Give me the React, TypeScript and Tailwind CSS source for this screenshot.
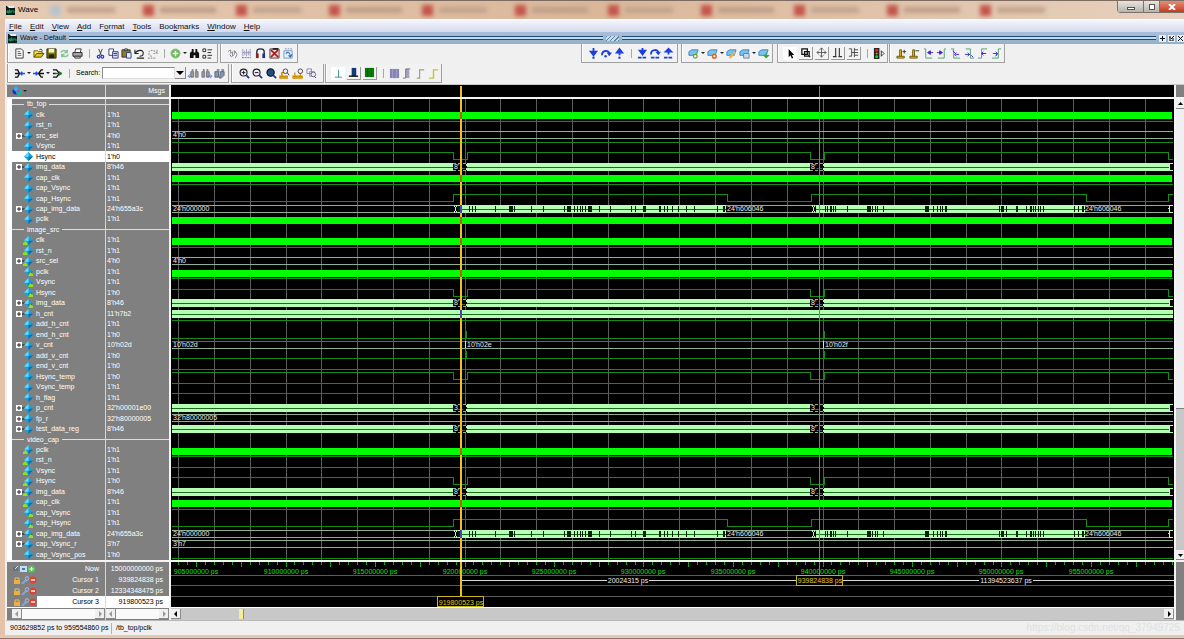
import React, { useState } from "react";

type Kind = "group" | "plain" | "in" | "out";
type Wave = "none" | "clock" | "high" | "low" | "sync" | "capSync" | "bus" | "dense" | "denseFull" | "capData" | "count" | "pulse";

type Signal = {
  name: string;
  value?: string;
  kind: Kind;
  wave: Wave;
  expand?: boolean;
  label?: string;
};

const signals: Signal[] = [
  { name: "tb_top", kind: "group", wave: "none" },
  { name: "clk", value: "1'h1", kind: "plain", wave: "clock" },
  { name: "rst_n", value: "1'h1", kind: "plain", wave: "high" },
  { name: "src_sel", value: "4'h0", kind: "plain", wave: "bus", expand: true, label: "4'h0" },
  { name: "Vsync", value: "1'h1", kind: "plain", wave: "high" },
  { name: "Hsync", value: "1'h0", kind: "plain", wave: "sync" },
  { name: "img_data", value: "8'h46", kind: "plain", wave: "dense", expand: true, label: "8'..." },
  { name: "cap_clk", value: "1'h1", kind: "plain", wave: "clock" },
  { name: "cap_Vsync", value: "1'h1", kind: "plain", wave: "high" },
  { name: "cap_Hsync", value: "1'h1", kind: "plain", wave: "capSync" },
  { name: "cap_img_data", value: "24'h655a3c", kind: "plain", wave: "capData", expand: true },
  { name: "pclk", value: "1'h1", kind: "plain", wave: "clock" },
  { name: "image_src", kind: "group", wave: "none" },
  { name: "clk", value: "1'h1", kind: "in", wave: "clock" },
  { name: "rst_n", value: "1'h1", kind: "in", wave: "high" },
  { name: "src_sel", value: "4'h0", kind: "in", wave: "bus", expand: true, label: "4'h0" },
  { name: "pclk", value: "1'h1", kind: "out", wave: "clock" },
  { name: "Vsync", value: "1'h1", kind: "out", wave: "high" },
  { name: "Hsync", value: "1'h0", kind: "out", wave: "sync" },
  { name: "img_data", value: "8'h46", kind: "out", wave: "dense", expand: true, label: "8'..." },
  { name: "h_cnt", value: "11'h7b2", kind: "plain", wave: "denseFull", expand: true },
  { name: "add_h_cnt", value: "1'h1", kind: "plain", wave: "high" },
  { name: "end_h_cnt", value: "1'h0", kind: "plain", wave: "pulse" },
  { name: "v_cnt", value: "10'h02d", kind: "plain", wave: "count", expand: true },
  { name: "add_v_cnt", value: "1'h0", kind: "plain", wave: "pulse" },
  { name: "end_v_cnt", value: "1'h0", kind: "plain", wave: "low" },
  { name: "Hsync_temp", value: "1'h0", kind: "plain", wave: "sync" },
  { name: "Vsync_temp", value: "1'h1", kind: "plain", wave: "high" },
  { name: "h_flag", value: "1'h1", kind: "plain", wave: "high" },
  { name: "p_cnt", value: "32'h00001e00", kind: "plain", wave: "dense", expand: true, label: "3..." },
  { name: "fp_r", value: "32'h80000005", kind: "plain", wave: "bus", expand: true, label: "32'h80000005" },
  { name: "test_data_reg", value: "8'h46", kind: "plain", wave: "dense", expand: true, label: "8'..." },
  { name: "video_cap", kind: "group", wave: "none" },
  { name: "pclk", value: "1'h1", kind: "in", wave: "clock" },
  { name: "rst_n", value: "1'h1", kind: "in", wave: "high" },
  { name: "Vsync", value: "1'h1", kind: "in", wave: "high" },
  { name: "Hsync", value: "1'h0", kind: "in", wave: "sync" },
  { name: "img_data", value: "8'h46", kind: "in", wave: "dense", expand: true, label: "8'..." },
  { name: "cap_clk", value: "1'h1", kind: "in", wave: "clock" },
  { name: "cap_Vsync", value: "1'h1", kind: "out", wave: "high" },
  { name: "cap_Hsync", value: "1'h1", kind: "out", wave: "capSync" },
  { name: "cap_img_data", value: "24'h655a3c", kind: "out", wave: "capData", expand: true },
  { name: "cap_Vsync_r", value: "3'h7", kind: "plain", wave: "bus", expand: true, label: "3'h7" },
  { name: "cap_Vsync_pos", value: "1'h0", kind: "plain", wave: "low" },
];

const SELECTED = 5;

// Geometry of the wave pane, in its own pixels
const ROWS_HEIGHT = 461;
const PITCH = ROWS_HEIGHT / signals.length;
const START = 1;
const END = 1002;
const CURSOR_3 = 290;
const CURSOR_1 = 648;
const timeX = (ps: number) => 25 + (ps - 905) * 17.9;

/* ---------- toolbar icons ---------- */

const icons: Record<string, React.ReactNode> = {
  fresh: <><path d="M2 1h6l2 2v8H2z" fill="#fff" stroke="#333" /><path d="M4 4h3M4 6h4M4 8h4" stroke="#555" /></>,
  open: <><path d="M1 10V3h4l1 1h4v2" fill="#f4e04a" stroke="#6a5a00" /><path d="M1 10l3-4h8l-3 4z" fill="#d9c31a" stroke="#5a4a00" /><path d="M7 2c1-1 3-1 3 1" stroke="#222" fill="none" /></>,
  save: <><path d="M1 1h10v10H1z" fill="#7a7400" stroke="#2c2a00" /><path d="M3 1h6v4H3z" fill="#f4f4c0" /><path d="M3 7h6v4H3z" fill="#222" /></>,
  reload: <path d="M2 5c1-3 6-3 7 0M9 2v3H6M10 7c-1 3-6 3-7 0M3 10V7h3" fill="none" stroke="#86c49a" strokeWidth="1.6" />,
  print: <><path d="M3 5l1-4h6l-1 4" fill="#fff" stroke="#333" /><path d="M1 5h10v4H1z" fill="#aaa" stroke="#222" /><path d="M3 9h6v2H3z" fill="#ddd" stroke="#333" /></>,
  cut: <><path d="M4 1l3 7M8 1L5 8" stroke="#334" fill="none" /><circle cx="4" cy="9.5" r="1.5" fill="none" stroke="#2330e0" strokeWidth="1.3" /><circle cx="8" cy="9.5" r="1.5" fill="none" stroke="#2330e0" strokeWidth="1.3" /></>,
  copy: <><path d="M1 1h5v7H1z" fill="#fff" stroke="#33397a" /><path d="M5 4h6v7H5z" fill="#dfe3ff" stroke="#33397a" /><path d="M6 6h4M6 8h4" stroke="#33397a" /></>,
  paste: <><path d="M1 2h9v8H1z" fill="#8a7d20" stroke="#333" /><path d="M4 1h3v2H4z" fill="#ccc" stroke="#333" /><path d="M6 5h5v6H6z" fill="#e4e8ff" stroke="#33397a" /></>,
  undo: <path d="M1 2v4h4M1 6c3-5 10-4 9 0 0 2-2 3-4 3M3 11h8" fill="none" stroke="#222" strokeWidth="1.2" />,
  redo: <path d="M11 2v4H7M11 6C8 1 1 2 2 6c0 2 2 3 4 3M1 11h8" fill="none" stroke="#999" strokeWidth="1.2" strokeDasharray="2 1" />,
  add: <><circle cx="6" cy="6" r="5" fill="#6ab85a" stroke="#8cc880" /><path d="M6 3v6M3 6h6" stroke="#fff" strokeWidth="1.6" /></>,
  find: <><path d="M3 1h2v4H3zM7 1h2v4H7z" fill="#111" /><path d="M1 6l1-2h3v7H1zM7 4h3l1 2v5H7zM5 5h2v3H5z" fill="#111" /></>,
  tree: <path d="M1 1h3v3H1zM1 8h3v3H1zM6 2h5M6 5h4M6 8h5M6 11h4" fill="none" stroke="#222" />,
  squiggle: <><path d="M1 4l3-2v4l2-2v5l2-2V3l3 4-2 4" fill="none" stroke="#888" /><path d="M3 7l2 3M8 3l2 2" stroke="#6870d0" /></>,
  grid: <><path d="M2 1v8M4 3v5M6 1v8M8 3v5M10 1v8M1 5h10" stroke="#99b" fill="none" /><path d="M1 10.5h10" stroke="#5060d0" strokeDasharray="2 1" /></>,
  listen: <><path d="M2 9V4c0-4 8-4 8 0v5" fill="none" stroke="#223" strokeWidth="1.5" /><path d="M1 6h3v5H1z" fill="#8b2020" /><path d="M8 6h3v5H8z" fill="#24307c" /></>,
  stop: <><path d="M1 1h10v10H1z" fill="#dcdcdc" stroke="#444" /><path d="M2 2l8 8M10 2l-8 8" stroke="#b01818" strokeWidth="1.8" /><path d="M4 1h6" stroke="#222" strokeWidth="2" /></>,
  sheet: <><path d="M1 3h9v8H1z" fill="#e6f2fb" stroke="#6b9cc4" /><path d="M3 6c3-3 5 0 5 3M6 8l2 2 2-3" stroke="#3c72b4" fill="none" strokeWidth="1.2" /><path d="M2 1h8" stroke="#889" strokeDasharray="2 1" /></>,
  stepIn: <><path d="M6 0v5M3 4l3 4 3-4z" stroke="#1c3fe0" fill="#1c3fe0" strokeWidth="2" /><circle cx="6" cy="10.5" r="1.3" fill="#1c3fe0" /></>,
  stepOver: <><path d="M1 8c0-6 8-6 8-2" fill="none" stroke="#1c3fe0" strokeWidth="2" /><path d="M6 5h6L9 9z" fill="#1c3fe0" /><circle cx="5" cy="9" r="1.3" fill="#1c3fe0" /></>,
  stepOut: <><path d="M6 8V4M3 5l3-4 3 4z" stroke="#1c3fe0" fill="#1c3fe0" strokeWidth="2" /><circle cx="6" cy="10.5" r="1.3" fill="#1c3fe0" /></>,
  stepInC: <><path d="M6 0v4M3 3l3 4 3-4z" stroke="#1c3fe0" fill="#1c3fe0" strokeWidth="2" /><path d="M1 10.5h10" stroke="#1c3fe0" strokeWidth="2" strokeDasharray="4 1" /></>,
  stepOverC: <><path d="M1 7c0-6 8-6 8-2" fill="none" stroke="#1c3fe0" strokeWidth="2" /><path d="M6 4h6L9 8z" fill="#1c3fe0" /><path d="M1 10.5h10" stroke="#1c3fe0" strokeWidth="2" strokeDasharray="4 1" /></>,
  stepOutC: <><path d="M6 7V4M3 4l3-3 3 3z" stroke="#1c3fe0" fill="#1c3fe0" strokeWidth="2" /><path d="M1 10.5h10" stroke="#1c3fe0" strokeWidth="2" strokeDasharray="4 1" /></>,
  noteAdd: <><path d="M1 4l3-2h7l-2 6H1z" fill="#79c2ee" stroke="#3a86bd" /><circle cx="8" cy="9" r="2" fill="#fff" stroke="#5c9c30" strokeWidth="1.3" /></>,
  noteDel: <><path d="M1 4l3-2h7l-2 6H1z" fill="#79c2ee" stroke="#3a86bd" /><circle cx="8" cy="9" r="2" fill="#fff" stroke="#e06020" strokeWidth="1.6" /></>,
  noteEdit: <><path d="M1 4l3-2h7l-2 6H1z" fill="#79c2ee" stroke="#3a86bd" /><path d="M4 11l6-7" stroke="#e8b050" strokeWidth="2.5" /></>,
  noteSave: <><path d="M1 4l3-2h7l-2 6H1z" fill="#79c2ee" stroke="#3a86bd" /><path d="M5 6h6v5H5z" fill="#cdd9e8" stroke="#6a7f9c" /></>,
  noteLoad: <><path d="M1 4l3-2h7l-2 6H1z" fill="#79c2ee" stroke="#3a86bd" /><path d="M9 5v3M6 8h6l-3 3z" fill="#3c9c3c" stroke="#3c9c3c" /></>,
  pointer: <path d="M4 1v9l2-2 1.5 3.5 1.5-.7L7.5 7.5H10z" fill="#000" />,
  zoomBox: <path d="M2 2h6v6H2zM5 5h5v5H5zM9 9l2 2" fill="none" stroke="#111" strokeWidth="1.4" />,
  pan: <path d="M6 1v10M1 6h10M4 3l2-2 2 2M4 9l2 2 2-2M3 4L1 6l2 2M9 4l2 2-2 2" fill="none" stroke="#555" />,
  twoCursor: <path d="M4 1v9M8 1v9M1 10.5h4M7 10.5h4" fill="none" stroke="#333" strokeWidth="1.2" />,
  measure: <path d="M1 2h3v8H1M7 1v10M7 3h4M7 6h4M7 9h4M4 6h3" fill="none" stroke="#444" />,
  light: <><path d="M1 0h6v12H1z" fill="#222" /><circle cx="4" cy="2.5" r="1.6" fill="#f02020" /><circle cx="4" cy="6" r="1.2" fill="#b0a020" /><circle cx="4" cy="9.5" r="1.6" fill="#20d020" /><path d="M9 3l3 3-3 3z" fill="none" stroke="#333" /></>,
  cursorAdd: <><path d="M1 9h8v2H1zM4 9V2h2v7" fill="#f0c020" stroke="#6c5600" /><path d="M9 2v4M7 4h4" stroke="#333" /></>,
  cursorDel: <><path d="M1 9h8v2H1zM4 9V2h2v7" fill="#f0c020" stroke="#6c5600" /><path d="M7 3h4" stroke="#333" /></>,
  prevEdge: <><path d="M1 1h2v10h7" fill="none" stroke="#4aa070" /><path d="M11 5H7M8 3L5 5l3 2z" fill="#3a22d8" stroke="#3a22d8" /></>,
  nextEdge: <><path d="M11 1H9v10H2" fill="none" stroke="#4aa070" /><path d="M1 5h4M4 3l3 2-3 2z" fill="#3a22d8" stroke="#3a22d8" /></>,
  fallPrev: <><path d="M1 1h3v10h7" fill="none" stroke="#4aa070" /><path d="M10 7H6M7 5L5 7l2 2M3 3l3 3" fill="none" stroke="#3a22d8" /></>,
  fallNext: <><path d="M2 1h5v10h4" fill="none" stroke="#4aa070" /><path d="M1 7h5M4 5l2 2-2 2M8 8l2 2" fill="none" stroke="#3a22d8" /></>,
  risePrev: <><path d="M1 11h4V1h6" fill="none" stroke="#4aa070" /><path d="M10 6H5M7 4L5 6l2 2" fill="none" stroke="#3a22d8" /></>,
  riseNext: <><path d="M1 11h7V1h3" fill="none" stroke="#4aa070" /><path d="M2 6h5M5 4l2 2-2 2M5 9l2-2" fill="none" stroke="#3a22d8" /></>,
  driverR: <><path d="M1 2h3l2 4-2 4H1M1 6h4" fill="none" stroke="#111" strokeWidth="1.5" /><path d="M12 6H7M9 4L7 6l2 2" stroke="#1c50e8" fill="none" strokeWidth="1.5" /></>,
  driverL: <><path d="M11 2H9L6 6l3 4h2M6 6h6" fill="none" stroke="#111" strokeWidth="1.5" /><path d="M0 6h5M3 4l2 2-2 2" stroke="#1c50e8" fill="none" strokeWidth="1.5" /></>,
  driverG: <><path d="M1 2h4l3 4-3 4H1M1 6h4" fill="none" stroke="#111" strokeWidth="1.5" /><path d="M3 6h7M8 4l3 2-3 2z" stroke="#207820" fill="#207820" /></>,
  binL: <><path d="M4 1h2v3H4zM8 1h2v3H8z" fill="#888" /><path d="M3 4h3v6H3zM8 4h3v6H8z" fill="#999" stroke="#778" /><path d="M4 9L1 9M2 7L0 9l2 2" stroke="#6070d8" fill="none" /></>,
  binR: <><path d="M2 1h2v3H2zM6 1h2v3H6z" fill="#888" /><path d="M1 4h3v6H1zM6 4h3v6H6z" fill="#999" stroke="#778" /><path d="M7 9h4M10 7l2 2-2 2" stroke="#6070d8" fill="none" /></>,
  binAll: <><path d="M3 1h3v4H3zM8 1h3v4H8z" fill="#8895ac" /><path d="M1 4h4v6H1zM7 4h4v4l-3 3H6z" fill="#8895ac" stroke="#5b677d" /></>,
  zoomIn: <><circle cx="5" cy="5" r="3.8" fill="#eef" stroke="#222" strokeWidth="1.2" /><path d="M3 5h4M5 3v4" stroke="#111" /><path d="M8 8l3 3" stroke="#222c9c" strokeWidth="1.8" /></>,
  zoomOut: <><circle cx="5" cy="5" r="3.8" fill="#eef" stroke="#222" strokeWidth="1.2" /><path d="M3 5h4" stroke="#111" /><path d="M8 8l3 3" stroke="#222c9c" strokeWidth="1.8" /></>,
  zoomFull: <><circle cx="5" cy="5" r="4" fill="#1c4f86" stroke="#112" strokeWidth="1.2" /><path d="M8 8l3 3" stroke="#222c9c" strokeWidth="1.8" /></>,
  zoomCur: <><path d="M1 9h8v2H1zM3 9V5h2" fill="#f0b010" stroke="#d09000" strokeWidth="1.4" /><circle cx="7" cy="3.5" r="2.5" fill="#eef" stroke="#443" /><path d="M9 5l2 3" stroke="#333" /></>,
  zoomTwo: <><path d="M0 9h10v2H0zM2 9V5M8 9V5" fill="#f0b010" stroke="#d09000" strokeWidth="1.4" /><circle cx="8" cy="3.5" r="2.5" fill="#eef" stroke="#443" /></>,
  zoomSel: <><path d="M1 1h5v5H1zM4 4h5v5H4z" fill="none" stroke="#8a86b8" /><circle cx="8" cy="7" r="2.5" fill="#eef" stroke="#667" /><path d="M9 9l2 2" stroke="#3a3ac0" /></>,
  modeLine: <><path d="M0 0h12v12H0z" fill="#fff" /><path d="M6 2v8M2 10h8" stroke="#3c9090" fill="none" /></>,
  modeBlock: <><path d="M4 1h5v9H4z" fill="#123a78" /><path d="M1 10h10" stroke="#111" strokeWidth="1.5" /></>,
  modeFill: <><path d="M1 1h10v10H1z" fill="#0a7a0a" /><path d="M4 1v10M8 1v10" stroke="#0a5c0a" /></>,
  blockA: <><path d="M1 1h10v10H1z" fill="#8784b4" /><path d="M4 1v10M8 1v10" stroke="#a5a2cc" /></>,
  blockB: <><path d="M4 1h4v10H4z" fill="#a3a1c0" /><path d="M1 11h3V1h5" stroke="#777" fill="none" /></>,
  blockC: <path d="M2 11h3V2h5" stroke="#9aa088" fill="none" strokeWidth="1.3" />,
  blockD: <path d="M1 11h5V2h5" stroke="#c6c23c" fill="none" strokeWidth="1.5" />,
};

const Glyph = ({ name }: { name: string }) => (
  <svg viewBox="0 0 12 12" className="block size-[11px] shrink-0 overflow-visible" aria-hidden="true">
    {icons[name]}
  </svg>
);

const Tool = ({ name, wide }: { name: string; wide?: boolean }) => (
  <button type="button" aria-label={name} className={`flex h-4 shrink-0 items-center justify-center ${wide ? "w-[14px]" : "w-[13px]"}`}>
    <Glyph name={name} />
  </button>
);

const Raised = ({ name, flat }: { name: string; flat?: boolean }) => (
  <button
    type="button"
    aria-label={name}
    className={`mx-px flex h-[13px] w-[14px] shrink-0 items-center justify-center ${flat ? "bg-white" : "border-r border-b border-[#9a9a9a] bg-[#f4f4f4]"}`}
  >
    <Glyph name={name} />
  </button>
);

const Drop = () => (
  <button type="button" aria-label="More" className="flex h-4 w-[6px] shrink-0 items-center justify-center">
    <svg viewBox="0 0 4 2" className="block h-[2px] w-1"><path d="M0 0h4L2 2z" fill="#222" /></svg>
  </button>
);

const Sep = () => (
  <span className="flex w-[10px] shrink-0 justify-center"><span className="h-[9px] w-px bg-[#a8a8a8]" /></span>
);

const Group = ({ children, className }: { children: React.ReactNode; className: string }) => (
  <div className={`flex h-[19px] shrink-0 items-center border-r border-b border-l border-[#a0a0a0] bg-[#f2f2f2] shadow-[inset_1px_0_0_#fff] ${className}`}>
    {children}
  </div>
);

/* ---------- window chrome ---------- */

const AppIcon = () => (
  <svg viewBox="0 0 9 9" className="block size-[9px] shrink-0" aria-hidden="true">
    <path d="M0 0h5l4 2v7H0z" fill="#0c1c18" />
    <path d="M1 0h7v2H3z" fill="#e8eef0" />
    <path d="M1 7V5h1v2h1V4h1v3M5 7V5h3v2" fill="none" stroke="#20b878" strokeWidth="0.8" />
  </svg>
);

const TitleBar = () => (
  <header className="flex h-[19px] shrink-0 items-center overflow-hidden border-t border-[#7d6c62] bg-linear-to-r from-[#e6cbb4] via-[#dbb799] to-[#e6d0bd]">
    <div className="flex w-[50px] shrink-0 items-center gap-[3px] pl-[6px]">
      <AppIcon />
      <h1 className="text-[8px] leading-[10px] text-black">Wave</h1>
    </div>
    <div className="flex min-w-0 flex-1 overflow-hidden blur-[2px]">
      {[0, 1, 2, 3, 4, 5, 6, 7, 8, 9, 10].map((n) => (
        <div key={n} className="flex w-[93px] shrink-0 items-center gap-[6px]">
          <span className={`h-[11px] w-[11px] ${n === 0 ? "bg-[#b9c2cc]" : "bg-[#c4554b]"}`} />
          <span className={`h-[6px] ${n % 2 ? "w-[56px] bg-[#bf9f87]" : "w-[48px] bg-[#c2a48c]"}`} />
        </div>
      ))}
    </div>
    <div className="flex h-3 shrink-0 self-start rounded-bl-sm border-b border-l border-[#7a726c]">
      <button type="button" aria-label="Minimize" className="flex w-[26px] items-center justify-center border-r border-[#7a726c] bg-linear-to-b from-[#e9e4e0] to-[#b9b3ae]">
        <span className="mt-1 h-[3px] w-2 border border-[#555] bg-white" />
      </button>
      <button type="button" aria-label="Maximize" className="flex w-4 items-center justify-center border-r border-[#7a726c] bg-linear-to-b from-[#e9e4e0] to-[#b9b3ae]">
        <span className="size-[6px] border border-[#555] bg-white" />
      </button>
      <button type="button" aria-label="Close" className="flex w-6 items-center justify-center bg-linear-to-b from-[#e08f78] to-[#c9371a]">
        <svg viewBox="0 0 8 6" className="block h-[6px] w-2"><path d="M1 0l6 6M7 0L1 6" stroke="#fff" strokeWidth="2" /></svg>
      </button>
    </div>
  </header>
);

const menus = [
  ["", "F", "ile"],
  ["", "E", "dit"],
  ["", "V", "iew"],
  ["", "A", "dd"],
  ["F", "o", "rmat"],
  ["", "T", "ools"],
  ["Boo", "k", "marks"],
  ["", "W", "indow"],
  ["", "H", "elp"],
];

const MenuBar = () => (
  <nav className="flex h-[13px] shrink-0 items-center gap-2 border-t border-white bg-linear-to-b from-[#f4f6fc] to-[#d6dbec] pl-[3px]">
    {menus.map(([before, key, after]) => (
      <button type="button" key={before + key} className="text-[8px] leading-[11px] text-[#111]">
        {before}<u>{key}</u>{after}
      </button>
    ))}
  </nav>
);

const PaneButton = ({ label, d }: { label: string; d: string }) => (
  <button type="button" aria-label={label} className="flex size-[7px] items-center justify-center bg-[#e8eef4]">
    <svg viewBox="0 0 5 5" className="size-[5px]"><path d={d} stroke="#111" fill="none" /></svg>
  </button>
);

const DockTitle = () => (
  <div className="flex h-3 shrink-0 items-center gap-[3px] bg-linear-to-b from-[#a9bfdb] to-[#93b0c9] pl-[2px]">
    <AppIcon />
    <h2 className="text-[7px] leading-[10px] text-[#111]">Wave - Default</h2>
    <div className="h-1 flex-1 border-y border-[#1f4a73] bg-[#c6dcec]" />
    <div className="h-[5px] w-[13px] bg-[repeating-linear-gradient(135deg,#5f82a0_0_1px,#c6dcec_1px_3px)]" />
    <div className="h-1 flex-1 border-y border-[#1f4a73] bg-[#c6dcec]" />
    <div className="flex gap-[2px]">
      <PaneButton label="Dock" d="M2.5 0v5M0 2.5h5" />
      <PaneButton label="Undock" d="M0 1h2M1 1v4h3V2M2 3l3-3" />
      <PaneButton label="Close pane" d="M0 0l5 5M5 0L0 5" />
    </div>
  </div>
);

const Toolbars = () => {
  const [search, setSearch] = useState("");

  return (
    <div className="flex h-10 shrink-0 flex-col overflow-hidden bg-[#f0f0f0]">
      <div className="flex h-5 items-start">
        <Group className="ml-px pr-[3px] pl-[5px]">
          <Tool name="fresh" /><Drop /><Tool name="open" /><Tool name="save" /><Tool name="reload" /><Tool name="print" />
          <Sep />
          <Tool name="cut" /><Tool name="copy" /><Tool name="paste" /><Tool name="undo" /><Tool name="redo" />
          <Sep />
          <Tool name="add" /><Drop /><Tool name="find" /><Tool name="tree" />
        </Group>
        <Group className="ml-[2px] pr-[2px] pl-1">
          <Tool name="squiggle" wide /><Tool name="grid" wide /><Tool name="listen" wide /><Tool name="stop" wide /><Tool name="sheet" wide />
        </Group>
        <Group className="ml-[283px] pr-[2px] pl-[5px]">
          <Tool name="stepIn" /><Tool name="stepOver" /><Tool name="stepOut" />
          <Sep />
          <Tool name="stepInC" /><Tool name="stepOverC" /><Tool name="stepOutC" />
        </Group>
        <Group className="ml-[3px] pr-[2px] pl-[5px]">
          <Tool name="noteAdd" /><Drop /><Tool name="noteDel" /><Drop /><Tool name="noteEdit" /><Tool name="noteSave" /><Drop /><Tool name="noteLoad" />
        </Group>
        <Group className="ml-1 pr-[2px] pl-1">
          <Raised name="pointer" flat /><Raised name="zoomBox" /><Raised name="pan" /><Raised name="twoCursor" /><Raised name="measure" />
          <Sep />
          <Tool name="light" />
        </Group>
        <Group className="ml-px pr-px pl-1">
          <Tool name="cursorAdd" wide /><Tool name="cursorDel" /><Tool name="prevEdge" wide /><Tool name="nextEdge" />
          <Tool name="fallPrev" wide /><Tool name="fallNext" wide /><Tool name="risePrev" /><Tool name="riseNext" wide />
        </Group>
      </div>
      <div className="flex h-5 items-start">
        <Group className="ml-px pr-[2px] pl-[5px]">
          <Tool name="driverR" /><Drop /><Tool name="driverL" /><Drop /><Tool name="driverG" />
          <Sep />
          <label htmlFor="search" className="ml-[2px] w-[26px] text-[7px] leading-[10px] text-black">Search:</label>
          <input
            id="search"
            type="text"
            value={search}
            onChange={(e) => setSearch(e.target.value)}
            className="h-[12px] w-[73px] border border-[#8c8c8c] border-r-[#ddd] border-b-[#ddd] bg-white px-1 text-[7px] outline-none"
          />
          <button type="button" aria-label="Search history" className="mr-px flex h-[12px] w-[11px] items-center justify-center border-r border-b border-[#888] bg-[#f0f0f0]">
            <svg viewBox="0 0 8 4" className="h-1 w-2"><path d="M0 0h8L4 4z" fill="#000" /></svg>
          </button>
          <Tool name="binL" /><Tool name="binR" /><Tool name="binAll" />
        </Group>
        <Group className="ml-[2px] pr-[5px] pl-[5px]">
          <Tool name="zoomIn" wide /><Tool name="zoomOut" /><Tool name="zoomFull" wide /><Tool name="zoomCur" /><Tool name="zoomTwo" wide /><Tool name="zoomSel" />
        </Group>
        <Group className="ml-px pr-px pl-1">
          <Raised name="modeLine" flat /><Raised name="modeBlock" /><Raised name="modeFill" />
          <Sep />
          <Tool name="blockA" /><Tool name="blockB" /><Tool name="blockC" /><Tool name="blockD" />
        </Group>
      </div>
    </div>
  );
};

/* ---------- signal list ---------- */

const Diamond = ({ kind }: { kind: Kind }) => (
  <svg viewBox="0 0 9 9" className="block size-[9px] shrink-0 overflow-visible" aria-hidden="true">
    <path d="M4.500 0L9 4.500 4.500 9 0 4.500z" fill="#1aa0dc" />
    <path d="M4.500 0L0 4.500 4.500 5z" fill="#63dcf7" />
    <path d="M9 4.500L4.500 9V5z" fill="#0a6cac" />
    {kind === "in" && <path d="M-1 9V7l3-2 2 4z" fill="#8ee020" />}
    {kind === "out" && <path d="M4 9l2-4 3 2v2z" fill="#8ee020" />}
  </svg>
);

const SignalTable = () => (
  <table className="block h-[461px] text-[7px] leading-[10px] text-white">
    <tbody className="grid h-full auto-rows-fr">
      {signals.map((s, i) => (
        <tr key={i} className={`grid min-h-0 grid-cols-[94px_1fr] ${i === SELECTED ? "bg-white text-black" : ""}`}>
          <td className="flex min-h-0 items-center border-r border-[#d6d6d6] p-0">
            {s.kind === "group" ? (
              <>
                <span className="h-px w-3 bg-[#ddd]" />
                <span className="mx-[3px]">{s.name}</span>
                <span className="h-px flex-1 bg-[#ddd]" />
              </>
            ) : (
              <>
                <span className="flex w-3 shrink-0 items-center pl-1">
                  {s.expand && (
                    <svg viewBox="0 0 9 6" className="block h-[6px] w-[9px] shrink-0 overflow-visible" aria-hidden="true">
                      <path d="M0 0h6v6H0z" fill="#fff" />
                      <path d="M3 1v4M1 3h4M6 3h3" stroke="#222" />
                    </svg>
                  )}
                </span>
                <Diamond kind={s.kind} />
                <span className="ml-[3px] whitespace-nowrap">{s.name}</span>
              </>
            )}
          </td>
          <td className={`flex min-h-0 items-center p-0 whitespace-nowrap ${s.kind === "group" ? "" : "pl-px"}`}>
            {s.kind === "group" ? <span className="h-px w-full bg-[#ddd]" /> : s.value}
          </td>
        </tr>
      ))}
    </tbody>
  </table>
);

const cursors = [
  { name: "Cursor 1", time: "939824838 ps" },
  { name: "Cursor 2", time: "12334348475 ps" },
  { name: "Cursor 3", time: "919800523 ps" },
];

const CursorTable = () => (
  <table className="block h-[45px] bg-[#808080] text-[7px] leading-[10px] text-white">
    <tbody className="grid h-full grid-rows-[13px_1fr_1fr_1fr]">
      <tr className="grid min-h-0 grid-cols-[99px_1fr]">
        <td className="flex items-center justify-between border-r border-[#d6d6d6] p-0 pr-[6px] pl-[5px]">
          <svg viewBox="0 0 24 8" className="h-2 w-6" aria-hidden="true">
            <path d="M1 2h5v4H1z" fill="#5f7488" /><path d="M3 4l3-3" stroke="#dde" />
            <path d="M8 1h7v6H8z" fill="#c8dcf4" /><path d="M10 3h3v2h-3z" fill="#3f79c0" />
            <circle cx="19.5" cy="4" r="3.5" fill="#5fc25f" /><path d="M19.5 2v4M17.5 4h4" stroke="#fff" />
          </svg>
          Now
        </td>
        <td className="flex items-center justify-end p-0 pr-[6px]">15000000000 ps</td>
      </tr>
      {cursors.map((c, i) => (
        <tr key={c.name} className="grid min-h-0 grid-cols-[99px_1fr]">
          <td className="flex min-h-0 items-stretch border-r border-[#d6d6d6] p-0 pl-[6px]">
            <svg viewBox="0 0 24 8" className="h-2 w-6 shrink-0 self-center" aria-hidden="true">
              <path d="M1 4h6v4H1z" fill="#f0b040" /><path d="M2 4V2h4v2" stroke="#e8c070" fill="none" />
              <path d="M9 8l4-4" stroke="#7fa8dc" strokeWidth="2" /><circle cx="14" cy="2.5" r="1.8" fill="none" stroke="#9cc0ee" />
              <circle cx="20" cy="4" r="3.5" fill="#e04030" /><path d="M18 4h4" stroke="#fff" strokeWidth="1.4" />
            </svg>
            <span className={`flex flex-1 items-center justify-end pr-[6px] ${i === 2 ? "bg-white text-black" : ""}`}>{c.name}</span>
          </td>
          <td className={`flex min-h-0 items-center justify-end p-0 pr-[6px] ${i === 2 ? "bg-white text-black" : ""}`}>{c.time}</td>
        </tr>
      ))}
    </tbody>
  </table>
);

const Arrow = ({ d, label, dim }: { d: string; label: string; dim?: boolean }) => (
  <button type="button" aria-label={label} className="flex size-[10px] shrink-0 items-center justify-center border-r border-b border-[#8a8a8a] bg-[#f0f0f0]">
    <svg viewBox="0 0 6 6" className="size-[6px]"><path d={d} fill={dim ? "#999" : "#000"} /></svg>
  </button>
);

const LEFT = "M4 0v6L1 3z";
const RIGHT = "M2 0v6l3-3z";
const UP = "M0 4h5L2.500 1z";
const DOWN = "M0 2h5L2.500 5z";

/* ---------- wave pane ---------- */

const GREEN = "#168c16";
const LIME = "#00ff00";
const PALE = "#b4ffb4";
const BUSLINE = "#8fae8f";
const CURSOR = "#f0c020";
const CURSOR_DIM = "#a87c20";

// Value changes of the captured pixel data; wide ones are bursts
const changes = [
  [287, 2], [298, 1], [301, 1], [304, 1], [324, 1], [338, 4], [343, 1], [360, 1], [372, 1], [393, 1], [396, 4],
  [403, 1], [406, 1], [409, 1], [411, 1], [414, 1], [417, 4], [428, 1], [439, 1], [460, 1], [464, 1], [472, 3],
  [488, 2], [493, 1], [496, 1], [501, 1], [507, 1], [515, 1], [523, 1], [546, 1], [552, 2],
  [654, 1], [656, 1], [659, 2], [662, 1], [664, 1], [676, 1], [696, 4], [701, 1], [704, 1], [706, 1], [712, 1],
  [754, 4], [762, 1], [766, 1], [769, 1], [771, 1], [774, 2], [828, 1], [830, 3], [835, 1], [845, 2], [855, 1],
  [859, 2], [862, 1], [864, 1], [867, 1], [869, 1], [872, 1], [903, 1], [907, 1], [911, 2],
];

const Label = ({ x, y, children }: { x: number; y: number; children: React.ReactNode }) => (
  <text x={x} y={y} fontSize="7" fill="#ececec">{children}</text>
);

const Trace = ({ signal, row }: { signal: Signal; row: number }) => {
  const top = Math.round(row * PITCH + 1);
  const low = top + 7;
  const rect = (x1: number, x2: number, y: number, h: number, fill: string) => (
    <rect x={x1} y={y} width={x2 - x1} height={h} fill={fill} />
  );

  switch (signal.wave) {
    case "clock":
      return rect(START, END - 1, top + 2, 7, LIME);
    case "high":
      return rect(START, END, top, 1, GREEN);
    case "low":
      return rect(START, END, low, 1, GREEN);
    case "sync":
      return (
        <path
          d={`M${START} ${top + 0.5}H282.5V${low + 0.5}H296.5V${top + 0.5}H639.5V${low + 0.5}H653.5V${top + 0.5}H997.5V${low + 0.5}H${END}`}
          fill="none"
          stroke={GREEN}
        />
      );
    case "capSync":
      return (
        <path
          d={`M${START} ${low + 0.5}H282.5V${top + 0.5}H556.5V${low + 0.5}H640.5V${top + 0.5}H915.5V${low + 0.5}H997.5V${top + 0.5}H${END}`}
          fill="none"
          stroke={GREEN}
        />
      );
    case "bus":
      return (
        <>
          {rect(START, END, top, 1, BUSLINE)}
          {rect(START, END, low, 1, BUSLINE)}
          <Label x={2} y={top + 6}>{signal.label}</Label>
        </>
      );
    case "pulse":
      return (
        <>
          {rect(START, END, low, 1, GREEN)}
          {rect(295, 296, top, 7, GREEN)}
          {rect(653, 654, top, 7, GREEN)}
        </>
      );
    case "count":
      return (
        <>
          {rect(START, END, top, 1, "#5c6f54")}
          {rect(START, END, low, 1, BUSLINE)}
          {rect(294, 295, top, 7, PALE)}
          {rect(652, 653, top, 7, PALE)}
          <Label x={2} y={top + 6}>10'h02d</Label>
          <Label x={296} y={top + 6}>10'h02e</Label>
          <Label x={654} y={top + 6}>10'h02f</Label>
        </>
      );
    case "denseFull":
      return (
        <>
          {rect(START, END, top, 8, PALE)}
          {rect(START, END, top + 4, 1, "#1d6b1d")}
        </>
      );
    case "dense":
      return (
        <>
          {rect(START, END - 4, top, 8, PALE)}
          {rect(START, END, top + 4, 1, "#1d6b1d")}
          {[282, 639].map((x) => (
            <g key={x}>
              {rect(x, x + 14, top, 8, "#000")}
              <path d={`M${x} ${top + 0.5}h14M${x} ${top + 7.5}h14`} stroke={BUSLINE} strokeDasharray="3 2" />
              <path d={`M${x + 13.5} ${top + 1}v2M${x + 13.5} ${top + 5}v2`} stroke={PALE} />
              <Label x={x + 1} y={top + 6}>{signal.label}</Label>
            </g>
          ))}
          <path d={`M${END} ${top + 0.5}h-3l-1 3l1 4h3`} stroke={PALE} fill="#000" />
        </>
      );
    case "capData":
      return (
        <>
          {rect(START, END, top, 1, BUSLINE)}
          {rect(START, END, low, 1, BUSLINE)}
          {rect(287, 555, top, 8, PALE)}
          {rect(645, 914, top, 8, PALE)}
          {rect(287, 555, top + 4, 1, "#1d6b1d")}
          {rect(645, 914, top + 4, 1, "#1d6b1d")}
          {changes.map(([x, w]) => (
            <rect key={x} x={x} y={top + 1} width={w} height="6" fill="#062006" />
          ))}
          <path d={`M283 ${top}l2 4l-2 4M286 ${top}l-2 4l2 4M641 ${top}l2 4l-2 4M644 ${top}l-2 4l2 4M${END} ${top + 0.5}h-3l-1 3l1 4h3`} stroke={PALE} fill="none" />
          <Label x={2} y={top + 6}>24'h000000</Label>
          <Label x={556} y={top + 6}>24'h606046</Label>
          <Label x={914} y={top + 6}>24'h606046</Label>
        </>
      );
    default:
      return null;
  }
};

const gridTimes = Array.from({ length: 28 }, (_, n) => 904 + n * 2);

const WaveView = () => (
  <svg className="block h-[461px] w-full bg-black" shapeRendering="crispEdges" role="img" aria-label="Waveforms">
    {gridTimes.map((t) => (
      <rect key={t} x={Math.round(timeX(t))} y="0" width="1" height={ROWS_HEIGHT} fill="#5c5c5c" />
    ))}
    {signals.map((s, i) => (
      <Trace key={i} signal={s} row={i} />
    ))}
    <rect x={CURSOR_3 - 1} y="0" width="2" height={ROWS_HEIGHT} fill={CURSOR} />
    <rect x={CURSOR_1} y="0" width="1" height={ROWS_HEIGHT} fill={CURSOR_DIM} />
    {signals.map((s, i) =>
      s.wave === "clock" ? (
        <rect key={i} x={CURSOR_3 - 1} y={Math.round(i * PITCH + 1) + 2} width="2" height="7" fill="#cc5410" />
      ) : s.wave === "denseFull" || s.wave === "capData" ? (
        <rect key={i} x={CURSOR_3 - 1} y={Math.round(i * PITCH + 1)} width="2" height="8" fill="#4a44b0" />
      ) : null
    )}
  </svg>
);

const ticks = Array.from({ length: 112 }, (_, n) => 904 + n * 0.5);
const stamps = [905, 910, 915, 920, 925, 930, 935, 940, 945, 950, 955];

const Timeline = () => (
  <svg className="block h-[45px] w-full bg-black" shapeRendering="crispEdges" role="img" aria-label="Timeline">
    <g fontSize="7" textAnchor="middle">
      {ticks.map((t) => (
        <rect key={t} x={Math.round(timeX(t))} y="0" width="1" height={t % 2.5 === 0 ? 5 : 3} fill="#18a018" />
      ))}
      {stamps.map((t) => (
        <text key={t} x={Math.round(timeX(t))} y="12" fill="#10e010">{t}000000 ps</text>
      ))}
      <path d="M0 13.5H1003M0 23.5H1003M0 34.5H1003" stroke="#5a5a5a" />
      <path d="M290 18.5H436M478 18.5H626M672 18.5H808M862 18.5H1003" stroke="#d8d8d8" />
      <rect x={CURSOR_3 - 1} y="0" width="2" height="35" fill={CURSOR} />
      <rect x={CURSOR_1} y="0" width="1" height="13" fill={CURSOR_DIM} />
      <text x="457" y="21" fill="#ececec">20024315 ps</text>
      <text x="835" y="21" fill="#ececec">11394523637 ps</text>
      <rect x="625.5" y="13.5" width="46" height="10" fill="#000" stroke="#c8b418" />
      <text x="649" y="21" fill="#e0c820">939824838 ps</text>
      <rect x="266.5" y="34.5" width="46" height="10" fill="#000" stroke="#c8b418" />
      <text x="290" y="43" fill="#e0c820">919800523 ps</text>
    </g>
  </svg>
);

/* ---------- page ---------- */

const App = () => {
  return (
    <div className="flex min-h-screen flex-col overflow-hidden bg-[#e3c4ab] font-['Liberation_Sans',sans-serif]">
      <TitleBar />
      <div className="ml-[5px] flex flex-1 flex-col border-l border-[#f5efe9] bg-[#f0f0f0]">
        <MenuBar />
        <DockTitle />
        <Toolbars />

        <main className="flex flex-1 border-t border-[#c8c8c8] pl-px">
          <section className="flex w-[162px] shrink-0 flex-col bg-[#808080]">
            <div className="flex h-[14px] border-b-2 border-[#f4f4f4] bg-[#808080]">
              <div className="flex w-[99px] items-center border-r border-[#d6d6d6] pl-[5px]">
                <svg viewBox="0 0 10 10" className="size-[10px]" aria-hidden="true">
                  <circle cx="4" cy="5" r="3.5" fill="#2424d0" />
                  <circle cx="7" cy="6" r="3" fill="#18b890" />
                  <path d="M4 0l3 3-3 3-3-3z" fill="#30b4f0" />
                  <circle cx="6" cy="5" r="1.5" fill="#c040d0" />
                </svg>
                <Drop />
              </div>
              <div className="flex flex-1 items-center justify-end pr-1 text-[7px] leading-[10px] text-white">Msgs</div>
            </div>
            <div className="flex flex-1">
              <div className="w-[5px] bg-white" />
              <div className="flex-1"><SignalTable /></div>
            </div>
            <div className="border-t-2 border-[#f4f4f4]"><CursorTable /></div>
            <div className="flex h-[13px] border-t border-white">
              <div className="flex w-[99px] items-center border-r border-[#d6d6d6] pl-[5px]">
                <Arrow d={LEFT} label="Scroll names left" dim />
                <div className="h-[10px] flex-1 bg-[#fafafa]" />
                <Arrow d={RIGHT} label="Scroll names right" dim />
              </div>
              <div className="flex flex-1 items-center">
                <Arrow d={LEFT} label="Scroll values left" dim />
                <div className="h-[10px] flex-1 bg-[#fafafa]" />
                <Arrow d={RIGHT} label="Scroll values right" dim />
              </div>
            </div>
          </section>

          <section className="flex min-w-0 flex-1 flex-col border-x-2 border-[#f4f4f4] bg-black">
            <svg className="block h-[14px] w-full border-b-2 border-[#f4f4f4] bg-black" shapeRendering="crispEdges" aria-hidden="true">
              <rect x={CURSOR_3 - 1} y="1" width="2" height="11" fill={CURSOR} />
              <rect x={CURSOR_1} y="1" width="1" height="11" fill={CURSOR_DIM} />
            </svg>
            <div className="flex-1"><WaveView /></div>
            <div className="border-t-2 border-[#f4f4f4]"><Timeline /></div>
            <div className="flex h-[13px] items-center border-t border-white bg-[#c8c8c8]">
              <Arrow d={LEFT} label="Scroll waves left" />
              <div className="flex h-[10px] flex-1 pl-[58px]">
                <span className="w-[5px] border-r border-[#888] bg-[#f3ee98]" />
              </div>
              <Arrow d={RIGHT} label="Scroll waves right" />
            </div>
          </section>

          <aside className="flex w-2 shrink-0 flex-col overflow-hidden bg-[#808080]">
            <div className="h-[14px] border-b-2 border-[#f4f4f4]" />
            <div className="flex flex-1 flex-col bg-[#c8c8c8]">
              <Arrow d={UP} label="Scroll up" />
              <div className="h-[300px] border-b border-[#808080] bg-[#f0f0f2]" />
              <div className="flex-1" />
              <Arrow d={DOWN} label="Scroll down" />
            </div>
            <div className="h-[60px] border-t-2 border-[#f4f4f4]" />
          </aside>
        </main>

        <footer className="flex h-[15px] shrink-0 items-center border-t border-[#b8b8b8] pl-1 text-[7px] leading-[10px] text-black">
          <span className="w-[101px] whitespace-nowrap">903629852 ps to 959554860 ps</span>
          <span className="h-[11px] border-l border-[#b0b0b0] pl-1">/tb_top/pclk</span>
          <span className="ml-auto pr-1 text-[10px] text-[#e0e0e0]">https://blog.csdn.net/qq_37949725</span>
        </footer>
      </div>
      <div className="h-1 shrink-0 border-b border-[#8c7a6e] bg-[#e6c8b2]" />
    </div>
  );
};

export default App;
